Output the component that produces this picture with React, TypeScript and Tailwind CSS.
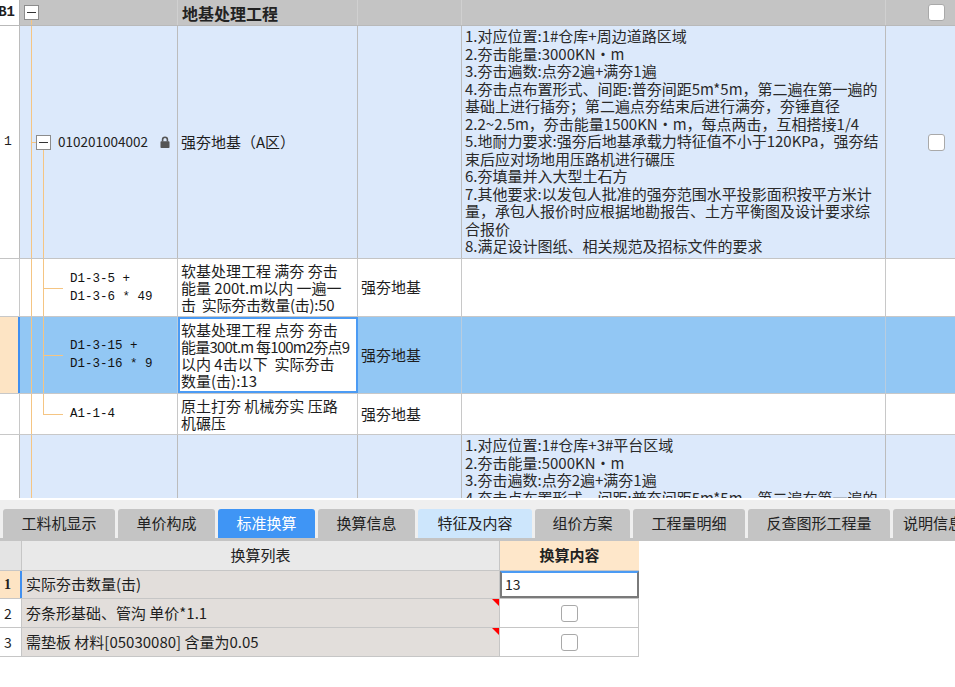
import React from "react";

const font = "font-['Noto_Sans_CJK_SC','Liberation_Sans',sans-serif]";

const desc1 = [
  "1.对应位置:1#仓库+周边道路区域",
  "2.夯击能量:3000KN・m",
  "3.夯击遍数:点夯2遍+满夯1遍",
  "4.夯击点布置形式、间距:普夯间距5m*5m，第二遍在第一遍的",
  "基础上进行插夯；第二遍点夯结束后进行满夯，夯锤直径",
  "2.2~2.5m，夯击能量1500KN・m，每点两击，互相搭接1/4",
  "5.地耐力要求:强夯后地基承载力特征值不小于120KPa，强夯结",
  "束后应对场地用压路机进行碾压",
  "6.夯填量并入大型土石方",
  "7.其他要求:以发包人批准的强夯范围水平投影面积按平方米计",
  "量，承包人报价时应根据地勘报告、土方平衡图及设计要求综",
  "合报价",
  "8.满足设计图纸、相关规范及招标文件的要求",
];

const desc2 = [
  "1.对应位置:1#仓库+3#平台区域",
  "2.夯击能量:5000KN・m",
  "3.夯击遍数:点夯2遍+满夯1遍",
  "4.夯击点布置形式、间距:普夯间距5m*5m，第二遍在第一遍的",
];

const tabs = [
  { label: "工料机显示", w: "w-[112px]", tone: "bg-[#c4c4c4] text-[#222]" },
  { label: "单价构成", w: "w-[97px]", tone: "bg-[#c4c4c4] text-[#222]" },
  { label: "标准换算", w: "w-[97px]", tone: "bg-[#3f95f5] text-white" },
  { label: "换算信息", w: "w-[97px]", tone: "bg-[#c4c4c4] text-[#222]" },
  { label: "特征及内容", w: "w-[114px]", tone: "bg-[#cde6fc] text-[#222]" },
  { label: "组价方案", w: "w-[95px]", tone: "bg-[#c4c4c4] text-[#222]" },
  { label: "工程量明细", w: "w-[112px]", tone: "bg-[#c4c4c4] text-[#222]" },
  { label: "反查图形工程量", w: "w-[142px]", tone: "bg-[#c4c4c4] text-[#222]" },
  { label: "说明信息", w: "w-[80px]", tone: "bg-[#c4c4c4] text-[#222]" },
];

function MinusBox({ className }: { className: string }) {
  return (
    <span
      className={`absolute flex h-[15px] w-[15px] items-center justify-center border border-[#8c8c8c] bg-white ${className}`}
    >
      <span className="h-px w-[9px] bg-[#333]" />
    </span>
  );
}

function Check() {
  return <span className="block h-[17px] w-[17px] rounded-[3px] border border-[#a9a9a9] bg-white" />;
}

function Lock() {
  return (
    <svg width="10" height="12" viewBox="0 0 10 12" className="ml-[12px] shrink-0">
      <path d="M2.6 5.5V3.6a2.4 2.4 0 0 1 4.8 0v1.9" fill="none" stroke="#555" strokeWidth="1.6" />
      <rect x="0.5" y="5.2" width="9" height="6.8" rx="0.8" fill="#555" />
    </svg>
  );
}

// orange tree connector lines
const vLine = "absolute w-px bg-[#f5c583]";
const hLine = "absolute h-px bg-[#f5c583]";

function ChildTree({ last, children }: { last?: boolean; children: React.ReactNode }) {
  return (
    <>
      <span className={`${vLine} left-[11px] top-0 bottom-0`} />
      {last ? (
        <span className={`${vLine} left-[23px] top-0 h-1/2`} />
      ) : (
        <span className={`${vLine} left-[23px] top-0 bottom-0`} />
      )}
      <span className={`${hLine} left-[23px] top-1/2 w-[20px]`} />
      <div className="ml-[50px] font-['Liberation_Mono',monospace] text-[12.5px] leading-[18px] text-[#111]">
        {children}
      </div>
    </>
  );
}

export default function App() {
  return (
    <div className={`h-[687px] w-[955px] overflow-hidden bg-white ${font} text-[#1e1e1e]`}>
      {/* upper grid */}
      <div className="h-[498px] overflow-hidden">
        {/* group row */}
        <div className="flex h-[26px] border-b border-[#b9b9b9] bg-[#c4c4c4]">
          <div className="flex w-[20px] shrink-0 items-center justify-end overflow-hidden border-r border-[#b3b3b3] bg-white pr-[4px] font-['Liberation_Mono',monospace] text-[14px] font-bold">
            B1
          </div>
          <div className="relative w-[158px] shrink-0 border-r border-[#d0d0d0]">
            <MinusBox className="left-[4px] top-[5px]" />
            <span className={`${vLine} left-[11px] top-[20px] bottom-0`} />
          </div>
          <div className="flex w-[180px] shrink-0 items-center border-r border-[#d0d0d0] pl-[4px] text-[16px] font-bold leading-none text-[#222]">
            地基处理工程
          </div>
          <div className="w-[104px] shrink-0 border-r border-[#d0d0d0]" />
          <div className="w-[424px] shrink-0 border-r border-[#d0d0d0]" />
          <div className="flex flex-1 items-center justify-end pr-[10px]">
            <Check />
          </div>
        </div>

        {/* 清单 row */}
        <div className="flex h-[233px] border-b border-[#c4c4c4] bg-[#dce9fb]">
          <div className="flex w-[20px] shrink-0 items-center border-r border-[#bcbcbc] bg-white pl-[4px] font-['Liberation_Mono',monospace] text-[13px]">
            1
          </div>
          <div className="relative flex w-[158px] shrink-0 items-center border-r border-[#bcbcbc]">
            <span className={`${vLine} left-[11px] top-0 bottom-0`} />
            <span className={`${hLine} left-[11px] top-1/2 w-[5px]`} />
            <span className={`${vLine} left-[23px] top-[calc(50%+8px)] bottom-0`} />
            <MinusBox className="left-[16px] top-[calc(50%-7px)]" />
            <span className="ml-[38px] shrink-0 text-[13.5px] leading-none text-[#222]">010201004002</span>
            <Lock />
          </div>
          <div className="flex w-[180px] shrink-0 items-center border-r border-[#bcbcbc] pl-[3px] text-[15px]">
            强夯地基（A区）
          </div>
          <div className="w-[104px] shrink-0 border-r border-[#bcbcbc]" />
          <div className="w-[424px] shrink-0 overflow-hidden whitespace-nowrap border-r border-[#bcbcbc] pl-[3px] pt-px text-[15px] leading-[17.5px] text-[#2a2a2a]">
            {desc1.map((l) => (
              <div key={l}>{l}</div>
            ))}
          </div>
          <div className="flex flex-1 items-center justify-end pr-[10px]">
            <Check />
          </div>
        </div>

        {/* 定额 rows */}
        <div className="flex h-[58px] border-b border-[#c8c8c8] bg-white">
          <div className="w-[20px] shrink-0 border-r border-[#c8c8c8]" />
          <div className="relative flex w-[158px] shrink-0 items-center border-r border-[#c8c8c8]">
            <ChildTree>
              D1-3-5 +
              <br />
              D1-3-6 * 49
            </ChildTree>
          </div>
          <div className="flex w-[180px] shrink-0 flex-col justify-center overflow-hidden whitespace-nowrap border-r border-[#c8c8c8] pl-[3px] text-[15px] leading-[17px]">
            <div>软基处理工程 满夯 夯击</div>
            <div>能量 200t.m以内 一遍一</div>
            <div className="tracking-[-0.3px]">击&nbsp;&nbsp;实际夯击数量(击):50</div>
          </div>
          <div className="flex w-[104px] shrink-0 items-center border-r border-[#c8c8c8] pl-[3px] text-[15px]">
            强夯地基
          </div>
          <div className="w-[424px] shrink-0 border-r border-[#c8c8c8]" />
          <div className="flex-1" />
        </div>

        <div className="flex h-[77px] border-b border-[#c8c8c8] bg-[#92c7f4]">
          <div className="w-[20px] shrink-0 border-r-2 border-[#3f8ff0] bg-[#fde4c4]" />
          <div className="relative flex w-[158px] shrink-0 items-center border-r border-[#b8cde0]">
            <ChildTree>
              D1-3-15 +
              <br />
              D1-3-16 * 9
            </ChildTree>
          </div>
          <div className="flex w-[180px] shrink-0 flex-col justify-center overflow-hidden whitespace-nowrap border-2 border-[#4b9bf4] bg-white pl-[1px] text-[15px] leading-[17px]">
            <div>软基处理工程 点夯 夯击</div>
            <div className="tracking-[-0.8px]">能量300t.m 每100m2夯点9</div>
            <div>以内 4击以下&nbsp;&nbsp;实际夯击</div>
            <div>数量(击):13</div>
          </div>
          <div className="flex w-[104px] shrink-0 items-center border-r border-[#b8cde0] pl-[3px] text-[15px]">
            强夯地基
          </div>
          <div className="w-[424px] shrink-0 border-r border-[#b8cde0]" />
          <div className="flex-1" />
        </div>

        <div className="flex h-[41px] border-b border-[#c8c8c8] bg-white">
          <div className="w-[20px] shrink-0 border-r border-[#c8c8c8]" />
          <div className="relative flex w-[158px] shrink-0 items-center border-r border-[#c8c8c8]">
            <ChildTree last>A1-1-4</ChildTree>
          </div>
          <div className="flex w-[180px] shrink-0 flex-col justify-center whitespace-nowrap border-r border-[#c8c8c8] pl-[3px] text-[15px] leading-[17px]">
            <div>原土打夯 机械夯实 压路</div>
            <div>机碾压</div>
          </div>
          <div className="flex w-[104px] shrink-0 items-center border-r border-[#c8c8c8] pl-[3px] text-[15px]">
            强夯地基
          </div>
          <div className="w-[424px] shrink-0 border-r border-[#c8c8c8]" />
          <div className="flex-1" />
        </div>

        <div className="flex h-[90px] bg-[#dce9fb]">
          <div className="w-[20px] shrink-0 border-r border-[#bcbcbc] bg-white" />
          <div className="relative w-[158px] shrink-0 border-r border-[#bcbcbc]">
            <span className={`${vLine} left-[11px] top-0 bottom-0`} />
          </div>
          <div className="w-[180px] shrink-0 border-r border-[#bcbcbc]" />
          <div className="w-[104px] shrink-0 border-r border-[#bcbcbc]" />
          <div className="w-[424px] shrink-0 overflow-hidden whitespace-nowrap border-r border-[#bcbcbc] pl-[3px] pt-px text-[15px] leading-[17.5px] text-[#2a2a2a]">
            {desc2.map((l) => (
              <div key={l}>{l}</div>
            ))}
          </div>
          <div className="flex-1" />
        </div>
      </div>

      <div className="h-[2px] bg-white" />

      {/* tab strip */}
      <div className="flex h-[41px] items-end gap-[3px] overflow-hidden border-b-[3px] border-[#c4c4c4] bg-[#efefef] pl-[3px]">
        {tabs.map((t) => (
          <div
            key={t.label}
            className={`flex h-[29px] shrink-0 items-center justify-center whitespace-nowrap rounded-t-[3px] text-[15px] ${t.w} ${t.tone}`}
          >
            {t.label}
          </div>
        ))}
      </div>

      {/* 换算列表 */}
      <div className="w-[639px] text-[15px]">
        <div className="flex h-[30px] border-b border-[#c6c6c6]">
          <div className="w-[22px] shrink-0 border-r border-[#c6c6c6] bg-[#e4e4e4]" />
          <div className="flex w-[478px] shrink-0 items-center justify-center border-r border-[#c6c6c6] bg-[#e9e9e9] text-[#222]">
            换算列表
          </div>
          <div className="flex flex-1 items-center justify-center bg-[#fee7ca] font-bold text-[#222]">换算内容</div>
        </div>

        <div className="flex h-[28px] border-b border-[#c6c6c6]">
          <div className="flex w-[22px] shrink-0 items-center border-r-2 border-[#3f8ff0] bg-[#fde4c4] pl-[4px] font-['Liberation_Serif',serif] text-[14px] font-bold">
            1
          </div>
          <div className="flex w-[478px] shrink-0 items-center border-r border-[#c6c6c6] bg-[#e2dedb] pl-[4px]">
            实际夯击数量(击)
          </div>
          <div className="flex flex-1 items-center border-2 border-[#7a7a7a] border-t-[#4b9bf4] bg-white pl-[3px] text-[14px]">
            13
          </div>
        </div>

        {["夯条形基础、管沟 单价*1.1", "需垫板 材料[05030080] 含量为0.05"].map((txt, i) => (
          <div key={txt} className="flex h-[29px] border-b border-[#c6c6c6]">
            <div className="flex w-[22px] shrink-0 items-center border-r border-[#c6c6c6] bg-white pl-[4px] text-[14px]">
              {i + 2}
            </div>
            <div className="relative flex w-[478px] shrink-0 items-center border-r border-[#c6c6c6] bg-[#e2dedb] pl-[4px]">
              {txt}
              <span className="absolute right-0 top-0 h-[7px] w-[7px] bg-[#f00] [clip-path:polygon(0_0,100%_0,100%_100%)]" />
            </div>
            <div className="flex flex-1 items-center justify-center border-r border-[#c6c6c6] bg-white">
              <Check />
            </div>
          </div>
        ))}
      </div>
    </div>
  );
}
